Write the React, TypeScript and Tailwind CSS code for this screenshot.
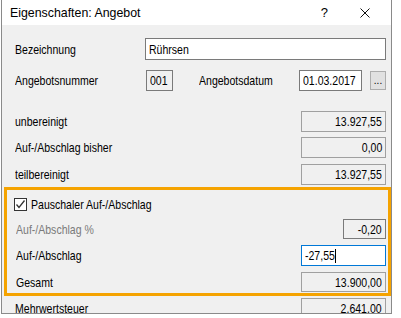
import React from 'react';

const font = { fontFamily: "'Liberation Sans', Arial, sans-serif" };

// Windows dialog text is narrower than Liberation Sans at the same height
const T: React.FC<{ children: React.ReactNode; right?: boolean }> = ({ children, right }) => (
  <span className={`inline-block whitespace-nowrap scale-x-[0.81] ${right ? 'origin-right' : 'origin-left'}`}>
    {children}
  </span>
);

interface ValueRowProps {
  label: string;
  value: string;
  muted?: boolean;
  boxClass: string;
  rowClass: string;
}

const ValueRow: React.FC<ValueRowProps> = ({ label, value, muted, boxClass, rowClass }) => (
  <div className={`flex items-center justify-between ${rowClass}`}>
    <span className={muted ? 'text-[#7a7a7a]' : 'text-black'}><T>{label}</T></span>
    <div className={`flex items-center justify-end bg-[#f0f0f0] border pr-[3px] ${boxClass}`}>
      <T right>{value}</T>
    </div>
  </div>
);

const App: React.FC = () => {
  return (
    <div className="w-[401px] h-[318px] bg-white overflow-hidden text-[13px] leading-none text-black" style={font}>
      <div className="ml-[1px] w-[391px] h-[314px] border-x border-b border-[#8a8a8a] flex flex-col overflow-hidden">
        {/* title bar */}
        <div className="h-[25px] shrink-0 bg-white flex items-center pl-[8px]">
          <span className="inline-block whitespace-nowrap origin-left scale-x-[0.95]">Eigenschaften: Angebot</span>
          <span className="ml-auto mr-[32px]">?</span>
          <svg width="10" height="10" viewBox="0 0 10 10" className="mr-[21px]">
            <path d="M0.5 0.5 L9.5 9.5 M9.5 0.5 L0.5 9.5" stroke="#111" strokeWidth="1" />
          </svg>
        </div>

        {/* body */}
        <div className="flex-1 bg-[#f0f0f0] flex flex-col pt-[13px]">
          <div className="flex items-center ml-[13px] mr-[5px] h-[22px]">
            <span className="w-[130px]"><T>Bezeichnung</T></span>
            <div className="flex-1 h-[22px] bg-white border border-[#7a7a7a] flex items-center pl-[3px]"><T>Rührsen</T></div>
          </div>

          <div className="flex items-center ml-[13px] mr-[5px] h-[21px] mt-[10px]">
            <span className="w-[131px]"><T>Angebotsnummer</T></span>
            <div className="w-[27px] h-[21px] bg-[#f0f0f0] border border-[#7a7a7a] flex items-center pl-[3px]"><T>001</T></div>
            <span className="ml-[26px] w-[100px]"><T>Angebotsdatum</T></span>
            <div className="w-[63px] h-[21px] bg-white border border-[#7a7a7a] flex items-center pl-[3px]"><T>01.03.2017</T></div>
            <div className="ml-[8px] w-[16px] h-[19px] bg-[#e1e1e1] border border-[#adadad] flex items-end justify-center pb-[3px] text-[10px]">...</div>
          </div>

          <ValueRow label="unbereinigt" value="13.927,55" rowClass="ml-[13px] mr-[5px] mt-[20px] h-[21px]" boxClass="w-[85px] h-[21px] border-[#a0a0a0]" />
          <ValueRow label="Auf-/Abschlag bisher" value="0,00" rowClass="ml-[13px] mr-[5px] mt-[5px] h-[21px]" boxClass="w-[85px] h-[21px] border-[#a0a0a0]" />
          <ValueRow label="teilbereinigt" value="13.927,55" rowClass="ml-[13px] mr-[5px] mt-[6px] h-[21px]" boxClass="w-[85px] h-[21px] border-[#a0a0a0]" />

          {/* highlighted section */}
          <div className="ml-[2px] mr-0 mt-[2px] border-[3px] border-[#f5a300] pl-[9px] pr-[2px] pt-[7px] pb-[1px]">
            <div className="flex items-center h-[14px]">
              <div className="w-[13px] h-[13px] ml-[-2px] bg-white border border-[#333] flex items-center justify-center">
                <svg width="11" height="11" viewBox="0 0 11 11">
                  <path d="M1.5 5.5 L4 8.5 L9.5 1.5" fill="none" stroke="#333" strokeWidth="1.3" />
                </svg>
              </div>
              <span className="ml-[4px]"><T>Pauschaler Auf-/Abschlag</T></span>
            </div>
            <ValueRow label="Auf-/Abschlag %" value="-0,20" muted rowClass="mt-[8px] h-[20px]" boxClass="w-[43px] h-[20px] border-[#7a7a7a]" />
            <div className="flex items-center justify-between mt-[6px] h-[21px]">
              <span><T>Auf-/Abschlag</T></span>
              <div className="w-[85px] h-[21px] bg-white border border-[#0078d7] flex items-center pl-[3px]">
                <T>-27,55</T>
                <span className="w-px h-[14px] bg-black ml-[-7px]" />
              </div>
            </div>
            <ValueRow label="Gesamt" value="13.900,00" rowClass="mt-[6px] h-[20px]" boxClass="w-[85px] h-[20px] border-[#a0a0a0]" />
          </div>

          <ValueRow label="Mehrwertsteuer" value="2.641,00" rowClass="ml-[13px] mr-[5px] mt-[2px] h-[21px]" boxClass="w-[85px] h-[21px] border-[#a0a0a0]" />
        </div>
      </div>
    </div>
  );
};

export default App;
